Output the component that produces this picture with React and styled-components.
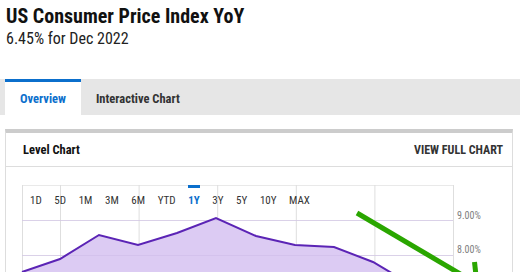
import React from "react";
import styled, { createGlobalStyle } from "styled-components";

const BLUE = "#0b6fcc";

const GlobalStyle = createGlobalStyle`
  body {
    margin: 0;
    background: #fff;
    font-family: "Roboto Condensed", Roboto, "Liberation Sans", sans-serif;
    color: #222;
  }
`;

const Page = styled.div`
  width: 520px;
  height: 272px;
  overflow: hidden;
`;

const Header = styled.header`
  padding: 4px 0 0 6px;
`;

const Title = styled.h1`
  margin: 0;
  font-size: 20px;
  line-height: 24px;
  font-weight: 700;
  color: #111;
`;

const Subtitle = styled.div`
  margin-top: 1px;
  font-size: 16px;
  line-height: 20px;
  color: #222;
`;

const TabBar = styled.nav`
  display: flex;
  height: 36px;
  margin-top: 30px;
  padding-left: 5px;
  background: #e6e6e6;
`;

const Tab = styled.div`
  display: flex;
  align-items: center;
  padding: 0 15px 1px;
  box-sizing: border-box;
  border-top: 3px solid ${p => (p.active ? BLUE : "transparent")};
  background: ${p => (p.active ? "#fff" : "transparent")};
  color: ${p => (p.active ? BLUE : "#333")};
  font-size: 12.5px;
  font-weight: 700;
`;

const Card = styled.section`
  margin: 14px 7px 0 5px;
  border-top: 4px solid #cccccc;
  border-left: 1px solid #dddddd;
  border-right: 1px solid #dddddd;
`;

const CardHeader = styled.div`
  display: flex;
  align-items: center;
  justify-content: space-between;
  height: 33px;
  padding: 0 9px 0 17px;
  border-bottom: 1px solid #dddddd;
  font-weight: 700;
`;

const CardTitle = styled.span`
  font-size: 12.5px;
  color: #111;
`;

const FullChartLink = styled.span`
  font-size: 12px;
  color: #333;
`;

const ChartBody = styled.div`
  position: relative;
  height: 120px;
  padding: 18px 0 0 16px;
`;

const RangeRow = styled.div`
  position: absolute;
  top: 18px;
  left: 24px;
  display: flex;
  gap: 12.6px;
`;

const RangeButton = styled.span`
  display: flex;
  align-items: center;
  height: 30px;
  padding-bottom: 3px;
  box-sizing: border-box;
  border-top: 3px solid ${p => (p.active ? BLUE : "transparent")};
  font-size: 11px;
  color: ${p => (p.active ? BLUE : "#333")};
  font-weight: ${p => (p.active ? 700 : 400)};
`;

const AxisLabel = styled.text`
  font-family: "Roboto Condensed", Roboto, sans-serif;
  font-size: 10px;
  fill: #808080;
`;

const ranges = ["1D", "5D", "1M", "3M", "6M", "YTD", "1Y", "3Y", "5Y", "10Y", "MAX"];

const cpi = [
  [0, 87], [38, 74], [77, 50], [116, 60], [155, 48], [194, 33],
  [234, 51], [273, 60], [312, 62], [351, 77], [390, 100],
];

const Chart = () => {
  const line = cpi.map(([x, y]) => `${x},${y}`).join(" ");
  const area = `0,140 ${line} 390,140`;
  const cols = [0, 38, 116.6, 195.2, 273.8, 352.4, 431];
  return (
    <svg width="490" height="120" style={{ display: "block", overflow: "visible" }}>
      {[0, 35, 70].map(y => (
        <line key={y} x1="0" x2="431" y1={y + 0.5} y2={y + 0.5} stroke="#e9e9e9" />
      ))}
      {cols.map(x => (
        <line key={x} x1={x + 0.5} x2={x + 0.5} y1="0" y2="120" stroke="#dedede" />
      ))}
      <polygon points={area} fill="#dccbf3" />
      {[35, 70].map(y => (
        <line key={y} x1="0" x2="431" y1={y + 0.5} y2={y + 0.5} stroke="#cbb9e8" strokeOpacity="0.5" />
      ))}
      <polyline points={line} fill="none" stroke="#5b24b5" strokeWidth="2" />
      <AxisLabel x="435" y="33.5">9.00%</AxisLabel>
      <AxisLabel x="435" y="67.5">8.00%</AxisLabel>
      <line x1="335" y1="28" x2="440" y2="90" stroke="#2aa600" strokeWidth="5" />
      <line x1="452.5" y1="77" x2="454.5" y2="95" stroke="#2aa600" strokeWidth="5" />
    </svg>
  );
};

export default function App() {
  return (
    <Page>
      <GlobalStyle />
      <Header>
        <Title>US Consumer Price Index YoY</Title>
        <Subtitle>6.45% for Dec 2022</Subtitle>
      </Header>
      <TabBar>
        <Tab active>Overview</Tab>
        <Tab>Interactive Chart</Tab>
      </TabBar>
      <Card>
        <CardHeader>
          <CardTitle>Level Chart</CardTitle>
          <FullChartLink>VIEW FULL CHART</FullChartLink>
        </CardHeader>
        <ChartBody>
          <Chart />
          <RangeRow>
            {ranges.map(r => (
              <RangeButton key={r} active={r === "1Y"}>{r}</RangeButton>
            ))}
          </RangeRow>
        </ChartBody>
      </Card>
    </Page>
  );
}
